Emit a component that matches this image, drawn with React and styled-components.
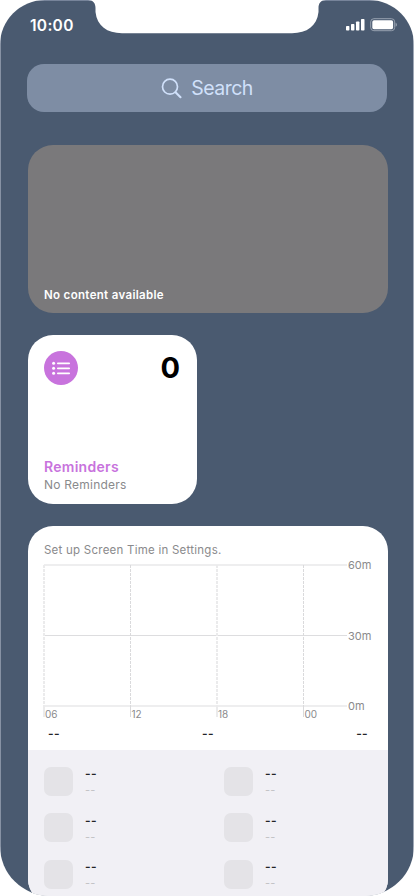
import React from "react";
import styled, { createGlobalStyle } from "styled-components";

const GlobalStyle = createGlobalStyle`
  * { box-sizing: border-box; }
  body { margin: 0; background: #fff; font-family: Inter, "Liberation Sans", sans-serif; }
`;

const Screen = styled.main`
  position: relative;
  width: 414px;
  height: 896px;
  overflow: hidden;
  border-radius: 45px 45px 50px 50px;
  background:
    linear-gradient(#8792a4, #8792a4) left / 1px 100% no-repeat,
    linear-gradient(#a0a9b7, #a0a9b7) right / 1px 100% no-repeat,
    linear-gradient(#77849a, #77849a) top / 100% 1px no-repeat,
    #4a5a70;
`;

const Notch = styled.svg`
  position: absolute;
  top: 0;
  left: 84px;
  display: block;
`;

const StatusBar = styled.header`
  display: flex;
  justify-content: space-between;
  height: 64px;
  padding: 16px 16px 0 30px;
`;

const Clock = styled.time`
  color: #fff;
  font-size: 15.5px;
  font-weight: 600;
  line-height: 20px;
  letter-spacing: 0.3px;
`;

const StatusIcons = styled.svg`
  display: block;
  margin-top: 2px;
`;

const SearchBar = styled.div`
  display: flex;
  align-items: center;
  justify-content: center;
  gap: 9px;
  width: 360px;
  height: 48px;
  margin-left: 27px;
  border-radius: 17px;
  background: #7e8da4;
  color: #d0e0fa;
  font-size: 19.5px;
  letter-spacing: -0.5px;
`;

const Widgets = styled.div`
  display: flex;
  flex-direction: column;
  gap: 22px;
  padding: 32.5px 26px 0 28px;
`;

const EmptyWidget = styled.section`
  display: flex;
  align-items: flex-end;
  height: 168.8px;
  padding: 0 16px 10px;
  border-radius: 25px;
  background: #7a797b;
  color: #fff;
  font-size: 11.5px;
  font-weight: 600;
  line-height: 16px;
  letter-spacing: 0.33px;
`;

const RemindersWidget = styled.section`
  display: flex;
  flex-direction: column;
  justify-content: space-between;
  width: 169px;
  height: 169px;
  padding: 15px 17px 10px 16px;
  border-radius: 25px;
  background: #fff;
`;

const ReminderHead = styled.div`
  display: flex;
  align-items: center;
  justify-content: space-between;
  height: 36px;
`;

const Count = styled.span`
  color: #000;
  font-size: 29px;
  font-weight: 700;
  line-height: 36px;
`;

const ReminderTitle = styled.div`
  color: #c873dd;
  font-size: 14px;
  font-weight: 600;
  line-height: 18px;
  letter-spacing: 0.28px;
`;

const ReminderNote = styled.div`
  color: #8a8a8c;
  font-size: 12px;
  line-height: 18px;
  letter-spacing: 0.23px;
`;

const ScreenTime = styled.section`
  height: 378px;
  overflow: hidden;
  border-radius: 25px;
  background: #fff;
`;

const Setup = styled.p`
  height: 33.7px;
  margin: 0;
  padding: 15.7px 16px 0;
  color: #8a8a8c;
  font-size: 11.5px;
  line-height: 16px;
  letter-spacing: 0.24px;
`;

const Chart = styled.svg`
  display: block;
  overflow: visible;
  text {
    font-family: Inter, "Liberation Sans", sans-serif;
    font-size: 11px;
    fill: #8a8a8c;
  }
  text.hour { font-size: 10px; }
`;

const Totals = styled.div`
  display: flex;
  justify-content: space-between;
  height: 28px;
  padding: 4px 20px 0 20px;
`;

const Dash = styled.span`
  display: block;
  color: ${({ $muted }) => ($muted ? "#c2c2c5" : "#242426")};
  font-size: ${({ $muted }) => ($muted ? 11 : 12)}px;
  font-weight: ${({ $muted }) => ($muted ? 400 : 600)};
  line-height: 16px;
  letter-spacing: 0.3px;
`;

const Apps = styled.div`
  display: grid;
  grid-template-columns: 180px 180px;
  grid-auto-rows: 46.5px;
  height: 154px;
  padding-top: 17px;
  background: #f1f0f5;
`;

const AppRow = styled.div`
  display: flex;
  gap: 12px;
  padding-left: 16px;
`;

const AppTile = styled.div`
  width: 29px;
  height: 29px;
  border-radius: 7px;
  background: #e4e3e7;
`;

const AppText = styled.div`
  margin-top: -0.7px;
`;

const hours = [
  { x: 16, width: 2, label: "06" },
  { x: 102.5, width: 1, label: "12" },
  { x: 189, width: 2, label: "18" },
  { x: 275.5, width: 1, label: "00" },
];
const levels = [
  { y: 5, width: 2, label: "60m" },
  { y: 75.5, width: 1, label: "30m" },
  { y: 146, width: 2, label: "0m" },
];

function UsageChart() {
  return (
    <Chart width="360" height="162" viewBox="0 0 360 162">
      {levels.map((l) => (
        <g key={l.label}>
          <line x1="16" x2="319" y1={l.y} y2={l.y} stroke={l.width === 2 ? "#eeeeef" : "#dddddf"} strokeWidth={l.width} />
          <text x="320" y={l.y + 4}>{l.label}</text>
        </g>
      ))}
      {hours.map((h) => (
        <g key={h.label} stroke={h.width === 2 ? "#ebebec" : "#dadadc"} strokeWidth={h.width}>
          <line x1={h.x} x2={h.x} y1="5" y2="146" strokeDasharray="3 1" />
          <line x1={h.x} x2={h.x} y1="146" y2="157" />
          <text className="hour" stroke="none" x={h.x + 1} y="158">{h.label}</text>
        </g>
      ))}
    </Chart>
  );
}

export default function App() {
  return (
    <>
      <GlobalStyle />
      <Screen>
        <StatusBar>
          <Clock>10:00</Clock>
          <StatusIcons width="52" height="14" viewBox="0 0 52 14">
            <g fill="#fff">
              <rect x="0" y="8" width="3.4" height="4.6" rx="0.8" />
              <rect x="5" y="6" width="3.4" height="6.6" rx="0.8" />
              <rect x="10" y="3.5" width="3.4" height="9.1" rx="0.8" />
              <rect x="15" y="1" width="3.5" height="11.6" rx="0.8" />
              <rect x="26.3" y="2.2" width="20.8" height="9" rx="1.7" />
            </g>
            <rect x="24.7" y="0.7" width="24" height="12" rx="3.2" fill="none" stroke="#97a1af" />
            <path d="M49.6 4.8c1.8.6 1.8 3.4 0 4z" fill="#97a1af" />
          </StatusIcons>
        </StatusBar>
        <SearchBar>
          <svg width="21" height="21" viewBox="0 0 21 21" fill="none" stroke="currentColor" strokeLinecap="round">
            <circle cx="9" cy="8.7" r="7.5" strokeWidth="1.7" />
            <path d="M14.5 14.2l5 5" strokeWidth="2.1" />
          </svg>
          Search
        </SearchBar>
        <Widgets>
          <EmptyWidget>No content available</EmptyWidget>
          <RemindersWidget>
            <ReminderHead>
              <svg width="34" height="34" viewBox="0 0 34 34">
                <circle cx="17" cy="17" r="17" fill="#c873dd" />
                {[12.3, 17.3, 22.3].map((y) => (
                  <g key={y} fill="#fff">
                    <circle cx="9.6" cy={y} r="1.5" />
                    <rect x="13" y={y - 0.9} width="13" height="1.8" rx="0.8" />
                  </g>
                ))}
              </svg>
              <Count>0</Count>
            </ReminderHead>
            <div>
              <ReminderTitle>Reminders</ReminderTitle>
              <ReminderNote>No Reminders</ReminderNote>
            </div>
          </RemindersWidget>
          <ScreenTime>
            <Setup>Set up Screen Time in Settings.</Setup>
            <UsageChart />
            <Totals>
              <Dash>--</Dash>
              <Dash>--</Dash>
              <Dash>--</Dash>
            </Totals>
            <Apps>
              {Array.from({ length: 6 }, (_, i) => (
                <AppRow key={i}>
                  <AppTile />
                  <AppText>
                    <Dash>--</Dash>
                    <Dash $muted>--</Dash>
                  </AppText>
                </AppRow>
              ))}
            </Apps>
          </ScreenTime>
        </Widgets>
        <Notch width="246" height="34" viewBox="0 0 246 34">
          <path d="M0 0H4C9 0 11.5 3 11.5 8V12C13 26 23 33.2 38 33.2H208C223 33.2 233 26 234.5 12V8C234.5 3 237 0 242 0H246Z" fill="#fff" />
        </Notch>
      </Screen>
    </>
  );
}
